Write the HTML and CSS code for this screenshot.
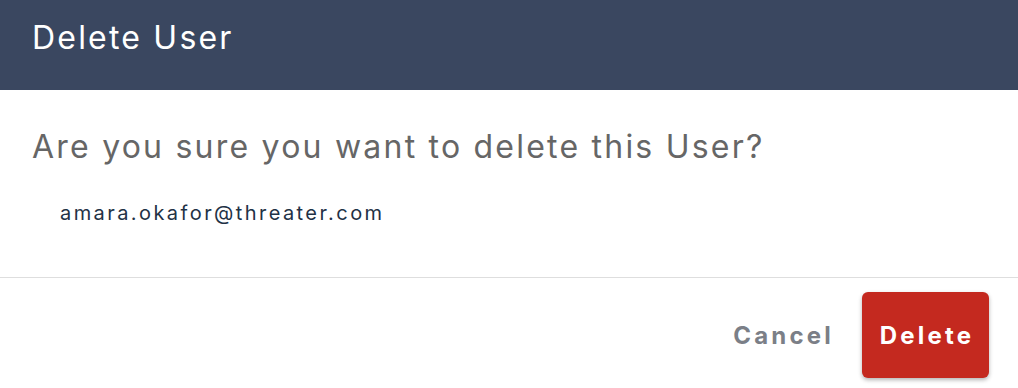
FILE: index.html
```html
<!DOCTYPE html>
<html>
<head>
<meta charset="utf-8">
<link rel="stylesheet" href="styles.css">
</head>
<body>
<div class="dialog">
  <header class="dialog-header">
    <h1 class="dialog-title">Delete User</h1>
  </header>
  <section class="dialog-body">
    <p class="question">Are you sure you want to delete this User?</p>
    <p class="email">amara.okafor@threater.com</p>
  </section>
  <footer class="dialog-footer">
    <button class="btn btn-cancel">Cancel</button>
    <button class="btn btn-delete">Delete</button>
  </footer>
</div>
</body>
</html>
```

FILE: styles.css
```css
html, body {
  margin: 0;
  padding: 0;
  background: #ffffff;
}
body {
  font-family: Inter, "Liberation Sans", Arial, sans-serif;
  width: 1018px;
  height: 388px;
  overflow: hidden;
}
.dialog {
  display: flex;
  flex-direction: column;
  width: 1018px;
}
.dialog-header {
  background: #3a4760;
  height: 90px;
  padding: 18px 32px 0 32px;
  box-sizing: border-box;
}
.dialog-title {
  margin: 0;
  color: #ffffff;
  font-size: 32px;
  line-height: 40px;
  font-weight: 400;
  letter-spacing: 2.2px;
}
.dialog-body {
  padding: 37px 32px 0 32px;
  height: 188px;
  box-sizing: border-box;
  border-bottom: 1px solid #dedede;
}
.question {
  margin: 0;
  color: #666666;
  font-size: 32px;
  line-height: 40px;
  font-weight: 400;
  letter-spacing: 2.22px;
}
.email {
  margin: 34px 0 0 28px;
  color: #1f3246;
  font-size: 20px;
  line-height: 24px;
  letter-spacing: 2.42px;
}
.dialog-footer {
  display: flex;
  justify-content: flex-end;
  align-items: center;
  padding: 14px 29px 0 0;
  gap: 28px;
}
.btn {
  font-family: inherit;
  border: none;
  font-size: 24px;
  font-weight: 700;
  letter-spacing: 3.2px;
  cursor: pointer;
}
.btn-cancel {
  background: transparent;
  color: #7b7f87;
  padding: 0;
}
.btn-delete {
  background: #c4291f;
  color: #ffffff;
  width: 127px;
  height: 86px;
  padding: 0 0 0 3px;
  border-radius: 6px;
  box-shadow: 0 2px 4px rgba(0,0,0,0.3);
}
```
